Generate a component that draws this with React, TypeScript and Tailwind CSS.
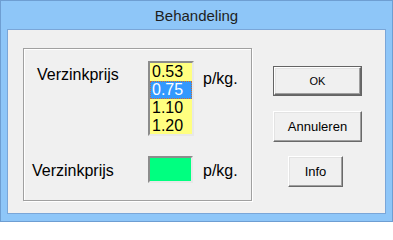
import React from "react";

const font = { fontFamily: '"Liberation Sans", Arial, sans-serif' };

const prices = ["0.53", "0.75", "1.10", "1.20"];

const Button: React.FC<{ label: string; primary?: boolean; className?: string; textClass?: string }> = ({
  label,
  primary,
  className = "",
  textClass = "text-[13px]",
}) => (
  <div className={`${primary ? "border border-[#646464]" : ""} ${className}`}>
    <div className="h-full w-full border border-t-white border-l-white border-r-[#696969] border-b-[#696969] bg-[#f0f0f0] shadow-[inset_-1px_-1px_0_#a0a0a0,inset_1px_1px_0_#e3e3e3] flex items-center justify-center">
      <span className={`${textClass} text-black leading-none`}>{label}</span>
    </div>
  </div>
);

const App: React.FC = () => {
  return (
    <div
      style={font}
      className="w-[393px] h-[222px] border border-[#6e9ed2] bg-[#8ec6f8] flex flex-col"
    >
      {/* titel */}
      <div className="h-[28px] flex items-center justify-center pt-[2px] text-[15px] text-[#1e1e1e]">
        Behandeling
      </div>

      {/* venster */}
      <div className="mx-[6px] mb-[7px] flex-1 border border-[#7aa6d8] bg-[#f0f0f0] flex items-start pl-[15px] pt-[18px]">
        {/* groep */}
        <div className="w-[229px] h-[153px] border border-[#a0a0a0] shadow-[inset_1px_1px_0_#fff,1px_1px_0_#fff] flex flex-col pt-[12px]">
          <div className="flex items-start pl-[13px]">
            <div className="w-[111px] mt-[5px] text-[16px] leading-[18px] text-black">Verzinkprijs</div>
            <div className="w-[46px] h-[75px] border-2 border-t-[#8c8c8c] border-l-[#8c8c8c] border-r-[#e8e8e8] border-b-[#e8e8e8] bg-[#ffff80] overflow-hidden">
              {prices.map((p, i) =>
                i === 1 ? (
                  <div
                    key={p}
                    className="h-[18px] bg-[#3399ff] border border-dotted border-[#c8703a] pl-[1px] text-[16px] leading-[16px] text-white"
                  >
                    {p}
                  </div>
                ) : (
                  <div key={p} className="h-[18px] pl-[2px] text-[16px] leading-[18px] text-black">
                    {p}
                  </div>
                )
              )}
            </div>
            <div className="ml-[9px] mt-[9px] text-[16px] leading-[18px] text-black">p/kg.</div>
          </div>

          <div className="flex items-start pl-[8px] mt-[20px]">
            <div className="w-[116px] mt-[6px] text-[16px] leading-[18px] text-black">Verzinkprijs</div>
            <div className="w-[45px] h-[27px] border-2 border-t-[#8c8c8c] border-l-[#8c8c8c] border-r-[#e8e8e8] border-b-[#e8e8e8] bg-[#00ff80]" />
            <div className="ml-[10px] mt-[6px] text-[16px] leading-[18px] text-black">p/kg.</div>
          </div>
        </div>

        {/* knoppen */}
        <div className="ml-[21px] mt-[18px] flex flex-col">
          <Button label="OK" primary className="w-[89px] h-[30px]" textClass="text-[11px]" />
          <Button label="Annuleren" className="w-[89px] h-[31px] mt-[15px]" />
          <Button label="Info" className="w-[55px] h-[31px] mt-[14px] ml-[15px]" />
        </div>
      </div>
    </div>
  );
};

export default App;
